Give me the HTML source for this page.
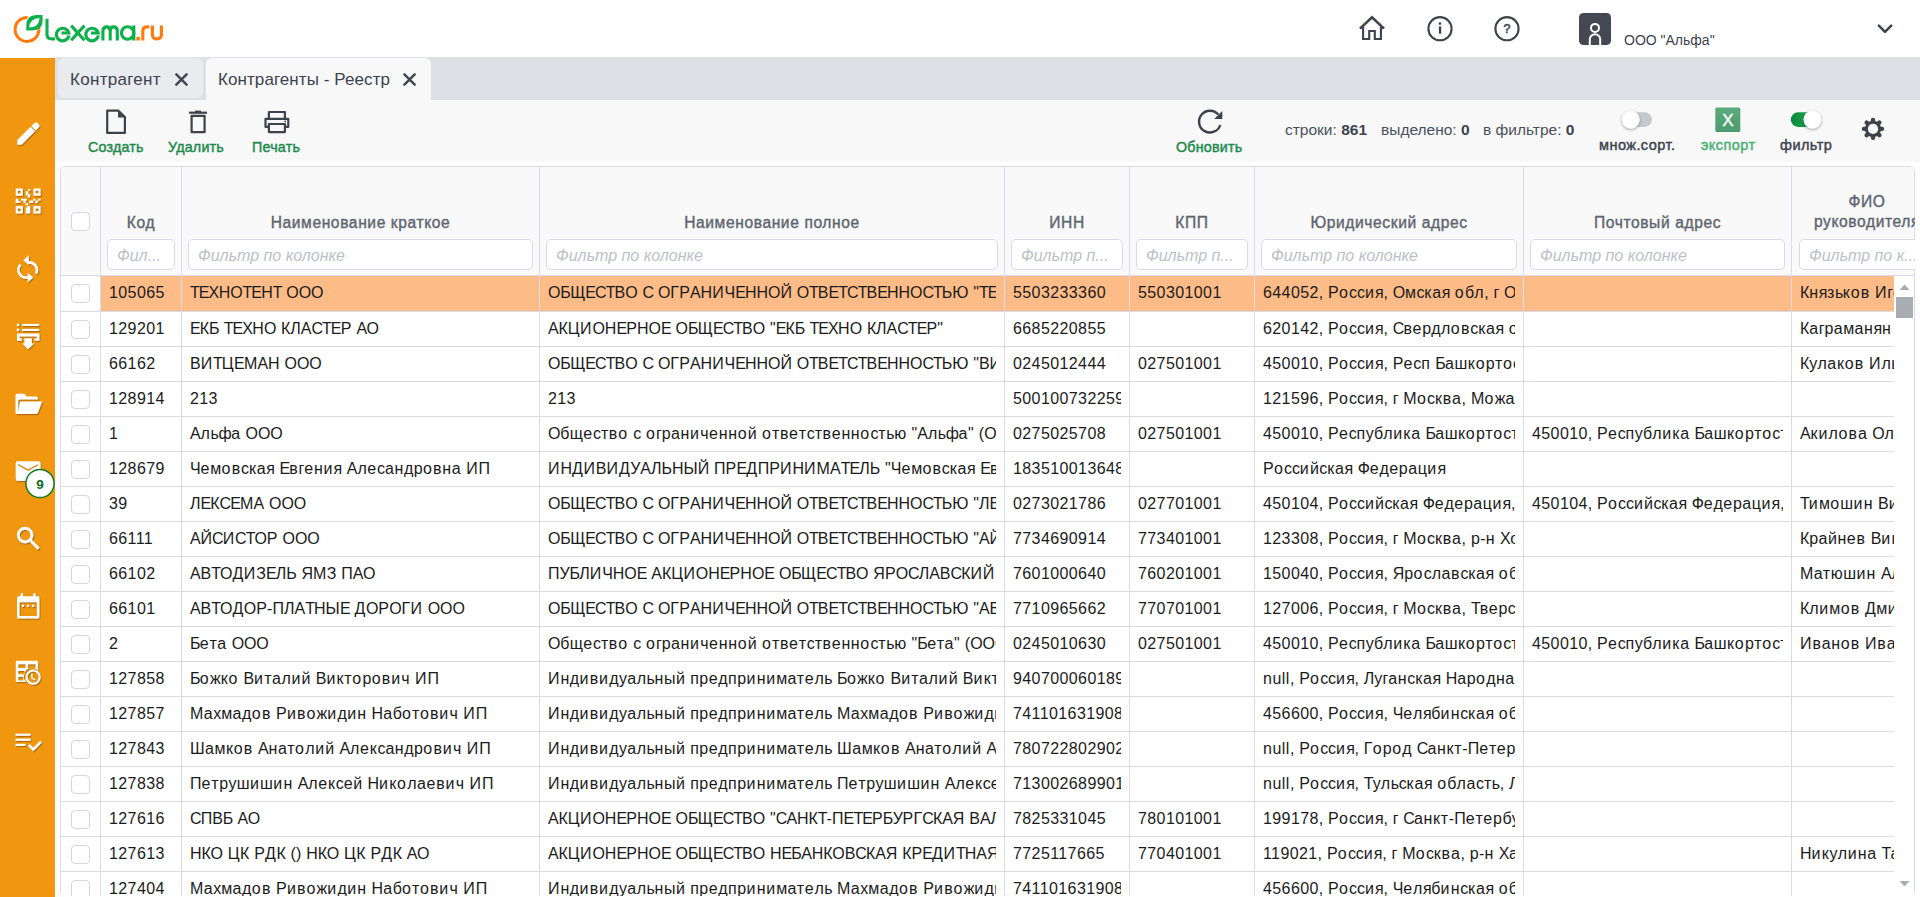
<!DOCTYPE html>
<html><head><meta charset="utf-8"><title>Контрагенты - Реестр</title>
<style>
*{box-sizing:border-box;margin:0;padding:0}
html,body{width:1920px;height:897px;overflow:hidden;background:#fff;font-family:"Liberation Sans",sans-serif;position:relative}
.abs{position:absolute}
#side{position:absolute;left:0;top:58px;width:55px;height:839px;background:#F0960F}
#tabbar{position:absolute;left:55px;top:57px;width:1865px;height:43px;background:#DDE0E5}
.tab{position:absolute;top:58px;height:40px;background:#E9EBEF;border-radius:6px;color:#3d4250;font-size:17px;line-height:42px}
.tab.act{background:#F8F8F9;height:42px;border-radius:6px 6px 0 0}
#toolbar{position:absolute;left:56px;top:100px;width:1864px;height:62px;background:#F8F8F9}
.tbl{position:absolute;top:138px;font-size:14.3px;font-weight:normal;-webkit-text-stroke:.45px currentColor;color:#1E8A4D;letter-spacing:.2px;line-height:18px;white-space:nowrap}
.gridbox{position:absolute;left:60px;top:166px;width:1855px;height:760px;border:1px solid #D9DBE6;border-radius:5px;background:#fff}
.ghead{position:absolute;left:61px;top:167px;width:1853px;height:108px;background:#F9F9FA;border-radius:4px 4px 0 0}
.vl{position:absolute;width:1px;background:#D9DBE6}
.hl{position:absolute;height:1px;background:#D9DBE6}
.cb{position:absolute;width:19px;height:19px;border:1px solid #D3D6DF;border-radius:4px;background:#fff}
.hcell{position:absolute;text-align:center;font-size:15.6px;font-weight:normal;-webkit-text-stroke:.4px #60666F;color:#60666F;letter-spacing:.6px;white-space:nowrap;overflow:hidden}
.flt{position:absolute;height:31px;border:1px solid #D8DBE3;border-radius:5px;background:#fff;overflow:hidden;white-space:nowrap}
.flt span{position:absolute;left:9px;top:1px;line-height:30px;font-size:16px;font-style:italic;color:#BBBFC9}
.selrow{position:absolute;background:#FDBB88}
i{font-style:normal}
.a0{letter-spacing:-1.0px}.a1{letter-spacing:-0.9px}.a2{letter-spacing:-0.8px}.a3{letter-spacing:-0.7px}.a4{letter-spacing:-0.6px}.a5{letter-spacing:-0.5px}.a6{letter-spacing:-0.4px}.a7{letter-spacing:-0.3px}.a8{letter-spacing:-0.2px}.a9{letter-spacing:-0.1px}.a10{letter-spacing:0.0px}.a11{letter-spacing:0.1px}.a12{letter-spacing:0.2px}.a13{letter-spacing:0.3px}.a14{letter-spacing:0.4px}.a15{letter-spacing:0.5px}.a16{letter-spacing:0.6px}.a17{letter-spacing:0.7px}.a18{letter-spacing:0.8px}.a19{letter-spacing:0.9px}.a20{letter-spacing:1.0px}.a21{letter-spacing:1.1px}.a22{letter-spacing:1.2px}
.cell{position:absolute;font-size:16px;color:#1b1b1b;white-space:nowrap;overflow:hidden}
.sbar{position:absolute;left:1894px;top:276px;width:20px;height:621px;background:#fff}
.sthumb{position:absolute;left:1896px;top:297px;width:17px;height:21px;background:#A9ACB3}
.sarr{position:absolute}
#gridclip{position:absolute;left:0;top:0;width:1920px;height:897px;clip-path:inset(166px 5px 1px 60px round 5px)}
#icons{position:absolute;left:0;top:0}
.stat{position:absolute;top:119.5px;font-size:15.5px;color:#4B505B;line-height:20px;white-space:nowrap}
.stat b{color:#3E434D}
</style></head>
<body>
<div id="side"></div>
<div id="tabbar"></div>
<div class="tab" style="left:58px;width:145px"><span class="abs" style="left:12px;top:1px;letter-spacing:.3px">Контрагент</span></div>
<div class="tab act" style="left:206px;width:225px"><span class="abs" style="left:12px;top:1px;letter-spacing:.08px">Контрагенты - Реестр</span></div>
<div id="toolbar"></div>
<div class="tbl" style="left:88px">Создать</div>
<div class="tbl" style="left:168px">Удалить</div>
<div class="tbl" style="left:252px">Печать</div>
<div class="tbl" style="left:1176px">Обновить</div>
<div class="stat" style="left:1285px">строки: <b>861</b></div>
<div class="stat" style="left:1381px">выделено: <b>0</b></div>
<div class="stat" style="left:1483px">в фильтре: <b>0</b></div>
<div class="tbl" style="top:136px;font-size:14.5px;letter-spacing:.45px;left:1599px;color:#3E434D">множ.сорт.</div>
<div class="tbl" style="top:136px;font-size:14.5px;letter-spacing:.45px;left:1701px;color:#4CAF72">экспорт</div>
<div class="tbl" style="top:136px;font-size:14.5px;letter-spacing:.45px;left:1780px;color:#3E434D">фильтр</div>
<div id="gridclip"><div class="gridbox"></div>
<div class="ghead"></div>
<div class="selrow" style="left:101px;top:276px;width:1793px;height:35px"></div>
<div class="vl" style="left:100px;top:167px;height:731px"></div>
<div class="vl" style="left:181px;top:167px;height:731px"></div>
<div class="vl" style="left:539px;top:167px;height:731px"></div>
<div class="vl" style="left:1004px;top:167px;height:731px"></div>
<div class="vl" style="left:1129px;top:167px;height:731px"></div>
<div class="vl" style="left:1254px;top:167px;height:731px"></div>
<div class="vl" style="left:1523px;top:167px;height:731px"></div>
<div class="vl" style="left:1791px;top:167px;height:731px"></div>
<div class="hl" style="left:61px;top:275px;width:1853px"></div>
<div class="cb" style="left:71px;top:212px"></div>
<div class="hcell" style="left:101px;width:80px;top:212.5px;height:20px;line-height:20px">Код</div>
<div class="flt" style="left:107px;top:239px;width:68px"><span>Фил...</span></div>
<div class="hcell" style="left:182px;width:357px;top:212.5px;height:20px;line-height:20px">Наименование краткое</div>
<div class="flt" style="left:188px;top:239px;width:345px"><span>Фильтр по колонке</span></div>
<div class="hcell" style="left:540px;width:464px;top:212.5px;height:20px;line-height:20px">Наименование полное</div>
<div class="flt" style="left:546px;top:239px;width:452px"><span>Фильтр по колонке</span></div>
<div class="hcell" style="left:1005px;width:124px;top:212.5px;height:20px;line-height:20px">ИНН</div>
<div class="flt" style="left:1011px;top:239px;width:112px"><span>Фильтр п...</span></div>
<div class="hcell" style="left:1130px;width:124px;top:212.5px;height:20px;line-height:20px">КПП</div>
<div class="flt" style="left:1136px;top:239px;width:112px"><span>Фильтр п...</span></div>
<div class="hcell" style="left:1255px;width:268px;top:212.5px;height:20px;line-height:20px">Юридический адрес</div>
<div class="flt" style="left:1261px;top:239px;width:256px"><span>Фильтр по колонке</span></div>
<div class="hcell" style="left:1524px;width:267px;top:212.5px;height:20px;line-height:20px">Почтовый адрес</div>
<div class="flt" style="left:1530px;top:239px;width:255px"><span>Фильтр по колонке</span></div>
<div class="hcell" style="left:1792px;width:150px;top:191.5px;height:44px;line-height:20px">ФИО<br>руководителя</div>
<div class="flt" style="left:1799px;top:239px;width:138px"><span>Фильтр по к...</span></div>
<div class="hl" style="left:61px;top:311px;width:1833px"></div>
<div class="cb" style="left:71px;top:284px"></div>
<div class="cell" style="left:109px;top:275px;width:64px;height:35px;line-height:35px"><i class="a14">105065</i></div>
<div class="cell" style="left:190px;top:275px;width:341px;height:35px;line-height:35px"><i class="a0">Т</i><i class="a1">Е</i><i class="a4">Х</i>Н<i class="a9">О</i><i class="a0">Т</i><i class="a1">Е</i>Н<i class="a0">Т</i><i class="a14"> </i><i class="a9">ООО</i></div>
<div class="cell" style="left:548px;top:275px;width:448px;height:35px;line-height:35px"><i class="a9">О</i><i class="a3">Б</i><i class="a11">Щ</i><i class="a1">ЕС</i><i class="a0">Т</i>В<i class="a9">О</i><i class="a14"> </i><i class="a1">С</i><i class="a14"> </i><i class="a9">О</i><i class="a12">ГР</i><i class="a9">А</i>Н<i class="a19">И</i><i class="a9">Ч</i><i class="a1">Е</i>НН<i class="a9">ОЙ</i><i class="a14"> </i><i class="a9">О</i><i class="a0">Т</i>В<i class="a1">Е</i><i class="a0">Т</i><i class="a1">С</i><i class="a0">Т</i>В<i class="a1">Е</i>НН<i class="a9">О</i><i class="a1">С</i><i class="a0">Т</i>Ь<i class="a8">Ю</i><i class="a14"> </i><i class="a11">&quot;</i><i class="a0">Т</i><i class="a1">Е</i><i class="a4">Х</i>Н<i class="a9">О</i><i class="a0">Т</i><i class="a1">Е</i>Н<i class="a0">Т</i><i class="a11">&quot;</i></div>
<div class="cell" style="left:1013px;top:275px;width:108px;height:35px;line-height:35px"><i class="a14">5503233360</i></div>
<div class="cell" style="left:1138px;top:275px;width:108px;height:35px;line-height:35px"><i class="a14">550301001</i></div>
<div class="cell" style="left:1263px;top:275px;width:252px;height:35px;line-height:35px"><i class="a14">644052</i>,<i class="a14"> </i><i class="a12">Р</i><i class="a22">о</i><i class="a9">сс</i><i class="a22">и</i><i class="a7">я</i>,<i class="a14"> </i><i class="a9">О</i><i class="a13">м</i><i class="a9">с</i><i class="a18">к</i><i class="a16">а</i><i class="a7">я</i><i class="a14"> </i><i class="a22">о</i><i class="a11">б</i><i class="a16">л</i>,<i class="a14"> </i><i class="a9">г</i><i class="a14"> </i><i class="a9">О</i><i class="a13">м</i><i class="a9">с</i><i class="a18">к</i></div>
<div class="cell" style="left:1800px;top:275px;width:94px;height:35px;line-height:35px"><i class="a9">К</i><i class="a16">н</i><i class="a7">я</i><i class="a15">з</i><i class="a6">ь</i><i class="a18">к</i><i class="a22">о</i><i class="a18">в</i><i class="a14"> </i><i class="a19">И</i><i class="a9">г</i><i class="a22">о</i><i class="a14">р</i><i class="a6">ь</i><i class="a14"> </i>Н<i class="a22">и</i><i class="a18">к</i><i class="a22">о</i><i class="a16">ла</i><i class="a18">ев</i><i class="a22">и</i><i class="a16">ч</i></div>
<div class="hl" style="left:61px;top:346px;width:1833px"></div>
<div class="cb" style="left:71px;top:320px"></div>
<div class="cell" style="left:109px;top:311px;width:64px;height:35px;line-height:35px"><i class="a14">129201</i></div>
<div class="cell" style="left:190px;top:311px;width:341px;height:35px;line-height:35px"><i class="a1">Е</i><i class="a9">К</i><i class="a3">Б</i><i class="a14"> </i><i class="a0">Т</i><i class="a1">Е</i><i class="a4">Х</i>Н<i class="a9">О</i><i class="a14"> </i><i class="a9">К</i>Л<i class="a9">А</i><i class="a1">С</i><i class="a0">Т</i><i class="a1">Е</i><i class="a12">Р</i><i class="a14"> </i><i class="a9">АО</i></div>
<div class="cell" style="left:548px;top:311px;width:448px;height:35px;line-height:35px"><i class="a9">АК</i><i class="a14">Ц</i><i class="a19">И</i><i class="a9">О</i>Н<i class="a1">Е</i><i class="a12">Р</i>Н<i class="a9">О</i><i class="a1">Е</i><i class="a14"> </i><i class="a9">О</i><i class="a3">Б</i><i class="a11">Щ</i><i class="a1">ЕС</i><i class="a0">Т</i>В<i class="a9">О</i><i class="a14"> </i><i class="a11">&quot;</i><i class="a1">Е</i><i class="a9">К</i><i class="a3">Б</i><i class="a14"> </i><i class="a0">Т</i><i class="a1">Е</i><i class="a4">Х</i>Н<i class="a9">О</i><i class="a14"> </i><i class="a9">К</i>Л<i class="a9">А</i><i class="a1">С</i><i class="a0">Т</i><i class="a1">Е</i><i class="a12">Р</i><i class="a11">&quot;</i></div>
<div class="cell" style="left:1013px;top:311px;width:108px;height:35px;line-height:35px"><i class="a14">6685220855</i></div>
<div class="cell" style="left:1263px;top:311px;width:252px;height:35px;line-height:35px"><i class="a14">620142</i>,<i class="a14"> </i><i class="a12">Р</i><i class="a22">о</i><i class="a9">сс</i><i class="a22">и</i><i class="a7">я</i>,<i class="a14"> </i><i class="a1">С</i><i class="a18">ве</i><i class="a14">рд</i><i class="a16">л</i><i class="a22">о</i><i class="a18">в</i><i class="a9">с</i><i class="a18">к</i><i class="a16">а</i><i class="a7">я</i><i class="a14"> </i><i class="a22">о</i><i class="a11">б</i><i class="a16">л</i></div>
<div class="cell" style="left:1800px;top:311px;width:94px;height:35px;line-height:35px"><i class="a9">К</i><i class="a16">а</i><i class="a9">г</i><i class="a14">р</i><i class="a16">а</i><i class="a13">м</i><i class="a16">ан</i><i class="a7">я</i><i class="a16">н</i><i class="a14"> </i><i class="a9">А</i><i class="a14">р</i><i class="a16">т</i><i class="a12">у</i><i class="a14">р</i></div>
<div class="hl" style="left:61px;top:381px;width:1833px"></div>
<div class="cb" style="left:71px;top:355px"></div>
<div class="cell" style="left:109px;top:346px;width:64px;height:35px;line-height:35px"><i class="a14">66162</i></div>
<div class="cell" style="left:190px;top:346px;width:341px;height:35px;line-height:35px">В<i class="a19">И</i><i class="a0">Т</i><i class="a14">Ц</i><i class="a1">Е</i><i class="a13">М</i><i class="a9">А</i>Н<i class="a14"> </i><i class="a9">ООО</i></div>
<div class="cell" style="left:548px;top:346px;width:448px;height:35px;line-height:35px"><i class="a9">О</i><i class="a3">Б</i><i class="a11">Щ</i><i class="a1">ЕС</i><i class="a0">Т</i>В<i class="a9">О</i><i class="a14"> </i><i class="a1">С</i><i class="a14"> </i><i class="a9">О</i><i class="a12">ГР</i><i class="a9">А</i>Н<i class="a19">И</i><i class="a9">Ч</i><i class="a1">Е</i>НН<i class="a9">ОЙ</i><i class="a14"> </i><i class="a9">О</i><i class="a0">Т</i>В<i class="a1">Е</i><i class="a0">Т</i><i class="a1">С</i><i class="a0">Т</i>В<i class="a1">Е</i>НН<i class="a9">О</i><i class="a1">С</i><i class="a0">Т</i>Ь<i class="a8">Ю</i><i class="a14"> </i><i class="a11">&quot;</i>В<i class="a19">И</i><i class="a0">Т</i><i class="a14">Ц</i><i class="a1">Е</i><i class="a13">М</i><i class="a9">А</i>Н<i class="a11">&quot;</i></div>
<div class="cell" style="left:1013px;top:346px;width:108px;height:35px;line-height:35px"><i class="a14">0245012444</i></div>
<div class="cell" style="left:1138px;top:346px;width:108px;height:35px;line-height:35px"><i class="a14">027501001</i></div>
<div class="cell" style="left:1263px;top:346px;width:252px;height:35px;line-height:35px"><i class="a14">450010</i>,<i class="a14"> </i><i class="a12">Р</i><i class="a22">о</i><i class="a9">сс</i><i class="a22">и</i><i class="a7">я</i>,<i class="a14"> </i><i class="a12">Р</i><i class="a18">е</i><i class="a9">с</i><i class="a15">п</i><i class="a14"> </i><i class="a3">Б</i><i class="a16">а</i><i class="a14">ш</i><i class="a18">к</i><i class="a22">о</i><i class="a14">р</i><i class="a16">т</i><i class="a22">о</i><i class="a9">с</i><i class="a16">тан</i></div>
<div class="cell" style="left:1800px;top:346px;width:94px;height:35px;line-height:35px"><i class="a9">К</i><i class="a12">у</i><i class="a16">ла</i><i class="a18">к</i><i class="a22">о</i><i class="a18">в</i><i class="a14"> </i><i class="a19">И</i><i class="a16">л</i><i class="a6">ь</i><i class="a7">я</i></div>
<div class="hl" style="left:61px;top:416px;width:1833px"></div>
<div class="cb" style="left:71px;top:390px"></div>
<div class="cell" style="left:109px;top:381px;width:64px;height:35px;line-height:35px"><i class="a14">128914</i></div>
<div class="cell" style="left:190px;top:381px;width:341px;height:35px;line-height:35px"><i class="a14">213</i></div>
<div class="cell" style="left:548px;top:381px;width:448px;height:35px;line-height:35px"><i class="a14">213</i></div>
<div class="cell" style="left:1013px;top:381px;width:108px;height:35px;line-height:35px"><i class="a14">500100732259</i></div>
<div class="cell" style="left:1263px;top:381px;width:252px;height:35px;line-height:35px"><i class="a14">121596</i>,<i class="a14"> </i><i class="a12">Р</i><i class="a22">о</i><i class="a9">сс</i><i class="a22">и</i><i class="a7">я</i>,<i class="a14"> </i><i class="a9">г</i><i class="a14"> </i><i class="a13">М</i><i class="a22">о</i><i class="a9">с</i><i class="a18">кв</i><i class="a16">а</i>,<i class="a14"> </i><i class="a13">М</i><i class="a22">о</i>ж<i class="a16">а</i><i class="a14">й</i><i class="a9">с</i><i class="a18">к</i><i class="a22">о</i><i class="a18">е</i><i class="a14"> ш</i></div>
<div class="hl" style="left:61px;top:451px;width:1833px"></div>
<div class="cb" style="left:71px;top:425px"></div>
<div class="cell" style="left:109px;top:416px;width:64px;height:35px;line-height:35px"><i class="a14">1</i></div>
<div class="cell" style="left:190px;top:416px;width:341px;height:35px;line-height:35px"><i class="a9">А</i><i class="a16">л</i><i class="a6">ьф</i><i class="a16">а</i><i class="a14"> </i><i class="a9">ООО</i></div>
<div class="cell" style="left:548px;top:416px;width:448px;height:35px;line-height:35px"><i class="a9">О</i><i class="a11">б</i><i class="a15">щ</i><i class="a18">е</i><i class="a9">с</i><i class="a16">т</i><i class="a18">в</i><i class="a22">о</i><i class="a14"> </i><i class="a9">с</i><i class="a14"> </i><i class="a22">о</i><i class="a9">г</i><i class="a14">р</i><i class="a16">ан</i><i class="a22">и</i><i class="a16">ч</i><i class="a18">е</i><i class="a16">нн</i><i class="a22">о</i><i class="a14">й </i><i class="a22">о</i><i class="a16">т</i><i class="a18">ве</i><i class="a16">т</i><i class="a9">с</i><i class="a16">т</i><i class="a18">ве</i><i class="a16">нн</i><i class="a22">о</i><i class="a9">с</i><i class="a16">т</i><i class="a6">ь</i><i class="a15">ю</i><i class="a14"> </i><i class="a11">&quot;</i><i class="a9">А</i><i class="a16">л</i><i class="a6">ьф</i><i class="a16">а</i><i class="a11">&quot;</i><i class="a14"> </i><i class="a11">(</i><i class="a9">ООО</i><i class="a14"> </i><i class="a11">&quot;</i><i class="a9">А</i><i class="a16">л</i><i class="a6">ьф</i><i class="a16">а</i><i class="a11">&quot;)</i></div>
<div class="cell" style="left:1013px;top:416px;width:108px;height:35px;line-height:35px"><i class="a14">0275025708</i></div>
<div class="cell" style="left:1138px;top:416px;width:108px;height:35px;line-height:35px"><i class="a14">027501001</i></div>
<div class="cell" style="left:1263px;top:416px;width:252px;height:35px;line-height:35px"><i class="a14">450010</i>,<i class="a14"> </i><i class="a12">Р</i><i class="a18">е</i><i class="a9">с</i><i class="a15">п</i><i class="a12">у</i><i class="a11">б</i><i class="a16">л</i><i class="a22">и</i><i class="a18">к</i><i class="a16">а</i><i class="a14"> </i><i class="a3">Б</i><i class="a16">а</i><i class="a14">ш</i><i class="a18">к</i><i class="a22">о</i><i class="a14">р</i><i class="a16">т</i><i class="a22">о</i><i class="a9">с</i><i class="a16">тан</i></div>
<div class="cell" style="left:1532px;top:416px;width:251px;height:35px;line-height:35px"><i class="a14">450010</i>,<i class="a14"> </i><i class="a12">Р</i><i class="a18">е</i><i class="a9">с</i><i class="a15">п</i><i class="a12">у</i><i class="a11">б</i><i class="a16">л</i><i class="a22">и</i><i class="a18">к</i><i class="a16">а</i><i class="a14"> </i><i class="a3">Б</i><i class="a16">а</i><i class="a14">ш</i><i class="a18">к</i><i class="a22">о</i><i class="a14">р</i><i class="a16">т</i><i class="a22">о</i><i class="a9">с</i><i class="a16">тан</i></div>
<div class="cell" style="left:1800px;top:416px;width:94px;height:35px;line-height:35px"><i class="a9">А</i><i class="a18">к</i><i class="a22">и</i><i class="a16">л</i><i class="a22">о</i><i class="a18">в</i><i class="a16">а</i><i class="a14"> </i><i class="a9">О</i><i class="a16">л</i><i class="a6">ь</i><i class="a9">г</i><i class="a16">а</i></div>
<div class="hl" style="left:61px;top:486px;width:1833px"></div>
<div class="cb" style="left:71px;top:460px"></div>
<div class="cell" style="left:109px;top:451px;width:64px;height:35px;line-height:35px"><i class="a14">128679</i></div>
<div class="cell" style="left:190px;top:451px;width:341px;height:35px;line-height:35px"><i class="a9">Ч</i><i class="a18">е</i><i class="a13">м</i><i class="a22">о</i><i class="a18">в</i><i class="a9">с</i><i class="a18">к</i><i class="a16">а</i><i class="a7">я</i><i class="a14"> </i><i class="a1">Е</i><i class="a18">в</i><i class="a9">г</i><i class="a18">е</i><i class="a16">н</i><i class="a22">и</i><i class="a7">я</i><i class="a14"> </i><i class="a9">А</i><i class="a16">л</i><i class="a18">е</i><i class="a9">с</i><i class="a16">ан</i><i class="a14">др</i><i class="a22">о</i><i class="a18">в</i><i class="a16">на</i><i class="a14"> </i><i class="a19">И</i>П</div>
<div class="cell" style="left:548px;top:451px;width:448px;height:35px;line-height:35px"><i class="a19">И</i>Н<i class="a16">Д</i><i class="a19">И</i>В<i class="a19">И</i><i class="a16">Д</i><i class="a8">У</i><i class="a9">А</i>ЛЬН<i class="a12">Ы</i><i class="a9">Й</i><i class="a14"> </i>П<i class="a12">Р</i><i class="a1">Е</i><i class="a16">Д</i>П<i class="a12">Р</i><i class="a19">И</i>Н<i class="a19">И</i><i class="a13">М</i><i class="a9">А</i><i class="a0">Т</i><i class="a1">Е</i>ЛЬ<i class="a14"> </i><i class="a11">&quot;</i><i class="a9">Ч</i><i class="a18">е</i><i class="a13">м</i><i class="a22">о</i><i class="a18">в</i><i class="a9">с</i><i class="a18">к</i><i class="a16">а</i><i class="a7">я</i><i class="a14"> </i><i class="a1">Е</i><i class="a18">в</i><i class="a9">г</i><i class="a18">е</i><i class="a16">н</i><i class="a22">и</i><i class="a7">я</i><i class="a11">&quot;</i></div>
<div class="cell" style="left:1013px;top:451px;width:108px;height:35px;line-height:35px"><i class="a14">183510013648</i></div>
<div class="cell" style="left:1263px;top:451px;width:252px;height:35px;line-height:35px"><i class="a12">Р</i><i class="a22">о</i><i class="a9">сс</i><i class="a22">и</i><i class="a14">й</i><i class="a9">с</i><i class="a18">к</i><i class="a16">а</i><i class="a7">я</i><i class="a14"> </i><i class="a8">Ф</i><i class="a18">е</i><i class="a14">д</i><i class="a18">е</i><i class="a14">р</i><i class="a16">а</i><i class="a15">ц</i><i class="a22">и</i><i class="a7">я</i></div>
<div class="hl" style="left:61px;top:521px;width:1833px"></div>
<div class="cb" style="left:71px;top:495px"></div>
<div class="cell" style="left:109px;top:486px;width:64px;height:35px;line-height:35px"><i class="a14">39</i></div>
<div class="cell" style="left:190px;top:486px;width:341px;height:35px;line-height:35px">Л<i class="a1">Е</i><i class="a9">К</i><i class="a1">СЕ</i><i class="a13">М</i><i class="a9">А</i><i class="a14"> </i><i class="a9">ООО</i></div>
<div class="cell" style="left:548px;top:486px;width:448px;height:35px;line-height:35px"><i class="a9">О</i><i class="a3">Б</i><i class="a11">Щ</i><i class="a1">ЕС</i><i class="a0">Т</i>В<i class="a9">О</i><i class="a14"> </i><i class="a1">С</i><i class="a14"> </i><i class="a9">О</i><i class="a12">ГР</i><i class="a9">А</i>Н<i class="a19">И</i><i class="a9">Ч</i><i class="a1">Е</i>НН<i class="a9">ОЙ</i><i class="a14"> </i><i class="a9">О</i><i class="a0">Т</i>В<i class="a1">Е</i><i class="a0">Т</i><i class="a1">С</i><i class="a0">Т</i>В<i class="a1">Е</i>НН<i class="a9">О</i><i class="a1">С</i><i class="a0">Т</i>Ь<i class="a8">Ю</i><i class="a14"> </i><i class="a11">&quot;</i>Л<i class="a1">Е</i><i class="a9">К</i><i class="a1">СЕ</i><i class="a13">М</i><i class="a9">А</i><i class="a11">&quot;</i></div>
<div class="cell" style="left:1013px;top:486px;width:108px;height:35px;line-height:35px"><i class="a14">0273021786</i></div>
<div class="cell" style="left:1138px;top:486px;width:108px;height:35px;line-height:35px"><i class="a14">027701001</i></div>
<div class="cell" style="left:1263px;top:486px;width:252px;height:35px;line-height:35px"><i class="a14">450104</i>,<i class="a14"> </i><i class="a12">Р</i><i class="a22">о</i><i class="a9">сс</i><i class="a22">и</i><i class="a14">й</i><i class="a9">с</i><i class="a18">к</i><i class="a16">а</i><i class="a7">я</i><i class="a14"> </i><i class="a8">Ф</i><i class="a18">е</i><i class="a14">д</i><i class="a18">е</i><i class="a14">р</i><i class="a16">а</i><i class="a15">ц</i><i class="a22">и</i><i class="a7">я</i>,<i class="a14"> </i><i class="a9">г</i></div>
<div class="cell" style="left:1532px;top:486px;width:251px;height:35px;line-height:35px"><i class="a14">450104</i>,<i class="a14"> </i><i class="a12">Р</i><i class="a22">о</i><i class="a9">сс</i><i class="a22">и</i><i class="a14">й</i><i class="a9">с</i><i class="a18">к</i><i class="a16">а</i><i class="a7">я</i><i class="a14"> </i><i class="a8">Ф</i><i class="a18">е</i><i class="a14">д</i><i class="a18">е</i><i class="a14">р</i><i class="a16">а</i><i class="a15">ц</i><i class="a22">и</i><i class="a7">я</i>,<i class="a14"> </i><i class="a9">г</i></div>
<div class="cell" style="left:1800px;top:486px;width:94px;height:35px;line-height:35px"><i class="a0">Т</i><i class="a22">и</i><i class="a13">м</i><i class="a22">о</i><i class="a14">ш</i><i class="a22">и</i><i class="a16">н</i><i class="a14"> </i>В<i class="a22">и</i><i class="a18">к</i><i class="a16">т</i><i class="a22">о</i><i class="a14">р</i></div>
<div class="hl" style="left:61px;top:556px;width:1833px"></div>
<div class="cb" style="left:71px;top:530px"></div>
<div class="cell" style="left:109px;top:521px;width:64px;height:35px;line-height:35px"><i class="a14">66111</i></div>
<div class="cell" style="left:190px;top:521px;width:341px;height:35px;line-height:35px"><i class="a9">АЙ</i><i class="a1">С</i><i class="a19">И</i><i class="a1">С</i><i class="a0">Т</i><i class="a9">О</i><i class="a12">Р</i><i class="a14"> </i><i class="a9">ООО</i></div>
<div class="cell" style="left:548px;top:521px;width:448px;height:35px;line-height:35px"><i class="a9">О</i><i class="a3">Б</i><i class="a11">Щ</i><i class="a1">ЕС</i><i class="a0">Т</i>В<i class="a9">О</i><i class="a14"> </i><i class="a1">С</i><i class="a14"> </i><i class="a9">О</i><i class="a12">ГР</i><i class="a9">А</i>Н<i class="a19">И</i><i class="a9">Ч</i><i class="a1">Е</i>НН<i class="a9">ОЙ</i><i class="a14"> </i><i class="a9">О</i><i class="a0">Т</i>В<i class="a1">Е</i><i class="a0">Т</i><i class="a1">С</i><i class="a0">Т</i>В<i class="a1">Е</i>НН<i class="a9">О</i><i class="a1">С</i><i class="a0">Т</i>Ь<i class="a8">Ю</i><i class="a14"> </i><i class="a11">&quot;</i><i class="a9">АЙ</i><i class="a1">С</i><i class="a19">И</i><i class="a1">С</i><i class="a0">Т</i><i class="a9">О</i><i class="a12">Р</i><i class="a11">&quot;</i></div>
<div class="cell" style="left:1013px;top:521px;width:108px;height:35px;line-height:35px"><i class="a14">7734690914</i></div>
<div class="cell" style="left:1138px;top:521px;width:108px;height:35px;line-height:35px"><i class="a14">773401001</i></div>
<div class="cell" style="left:1263px;top:521px;width:252px;height:35px;line-height:35px"><i class="a14">123308</i>,<i class="a14"> </i><i class="a12">Р</i><i class="a22">о</i><i class="a9">сс</i><i class="a22">и</i><i class="a7">я</i>,<i class="a14"> </i><i class="a9">г</i><i class="a14"> </i><i class="a13">М</i><i class="a22">о</i><i class="a9">с</i><i class="a18">кв</i><i class="a16">а</i>,<i class="a14"> р</i><i class="a12">-</i><i class="a16">н</i><i class="a14"> </i><i class="a4">Х</i><i class="a22">о</i><i class="a14">р</i><i class="a22">о</i><i class="a14">ш</i><i class="a18">ев</i><i class="a22">о</i></div>
<div class="cell" style="left:1800px;top:521px;width:94px;height:35px;line-height:35px"><i class="a9">К</i><i class="a14">р</i><i class="a16">а</i><i class="a14">й</i><i class="a16">н</i><i class="a18">ев</i><i class="a14"> </i>В<i class="a22">и</i><i class="a18">к</i><i class="a16">т</i><i class="a22">о</i><i class="a14">р</i></div>
<div class="hl" style="left:61px;top:591px;width:1833px"></div>
<div class="cb" style="left:71px;top:565px"></div>
<div class="cell" style="left:109px;top:556px;width:64px;height:35px;line-height:35px"><i class="a14">66102</i></div>
<div class="cell" style="left:190px;top:556px;width:341px;height:35px;line-height:35px"><i class="a9">А</i>В<i class="a0">Т</i><i class="a9">О</i><i class="a16">Д</i><i class="a19">И</i>З<i class="a1">Е</i>ЛЬ<i class="a14"> </i>Я<i class="a13">М</i>З<i class="a14"> </i>П<i class="a9">АО</i></div>
<div class="cell" style="left:548px;top:556px;width:448px;height:35px;line-height:35px">П<i class="a8">У</i><i class="a3">Б</i>Л<i class="a19">И</i><i class="a9">Ч</i>Н<i class="a9">О</i><i class="a1">Е</i><i class="a14"> </i><i class="a9">АК</i><i class="a14">Ц</i><i class="a19">И</i><i class="a9">О</i>Н<i class="a1">Е</i><i class="a12">Р</i>Н<i class="a9">О</i><i class="a1">Е</i><i class="a14"> </i><i class="a9">О</i><i class="a3">Б</i><i class="a11">Щ</i><i class="a1">ЕС</i><i class="a0">Т</i>В<i class="a9">О</i><i class="a14"> </i>Я<i class="a12">Р</i><i class="a9">О</i><i class="a1">С</i>Л<i class="a9">А</i>В<i class="a1">С</i><i class="a9">К</i><i class="a19">И</i><i class="a9">Й</i><i class="a14"> </i><i class="a13">М</i><i class="a9">О</i><i class="a0">Т</i><i class="a9">О</i><i class="a12">Р</i>Н<i class="a12">Ы</i><i class="a9">Й</i></div>
<div class="cell" style="left:1013px;top:556px;width:108px;height:35px;line-height:35px"><i class="a14">7601000640</i></div>
<div class="cell" style="left:1138px;top:556px;width:108px;height:35px;line-height:35px"><i class="a14">760201001</i></div>
<div class="cell" style="left:1263px;top:556px;width:252px;height:35px;line-height:35px"><i class="a14">150040</i>,<i class="a14"> </i><i class="a12">Р</i><i class="a22">о</i><i class="a9">сс</i><i class="a22">и</i><i class="a7">я</i>,<i class="a14"> </i>Я<i class="a14">р</i><i class="a22">о</i><i class="a9">с</i><i class="a16">ла</i><i class="a18">в</i><i class="a9">с</i><i class="a18">к</i><i class="a16">а</i><i class="a7">я</i><i class="a14"> </i><i class="a22">о</i><i class="a11">б</i><i class="a16">л</i></div>
<div class="cell" style="left:1800px;top:556px;width:94px;height:35px;line-height:35px"><i class="a13">М</i><i class="a16">ат</i><i class="a15">ю</i><i class="a14">ш</i><i class="a22">и</i><i class="a16">н</i><i class="a14"> </i><i class="a9">А</i><i class="a16">л</i><i class="a18">ек</i><i class="a9">с</i><i class="a18">е</i><i class="a14">й</i></div>
<div class="hl" style="left:61px;top:626px;width:1833px"></div>
<div class="cb" style="left:71px;top:600px"></div>
<div class="cell" style="left:109px;top:591px;width:64px;height:35px;line-height:35px"><i class="a14">66101</i></div>
<div class="cell" style="left:190px;top:591px;width:341px;height:35px;line-height:35px"><i class="a9">А</i>В<i class="a0">Т</i><i class="a9">О</i><i class="a16">Д</i><i class="a9">О</i><i class="a12">Р-</i>ПЛ<i class="a9">А</i><i class="a0">Т</i>Н<i class="a12">Ы</i><i class="a1">Е</i><i class="a14"> </i><i class="a16">Д</i><i class="a9">О</i><i class="a12">Р</i><i class="a9">О</i><i class="a12">Г</i><i class="a19">И</i><i class="a14"> </i><i class="a9">ООО</i></div>
<div class="cell" style="left:548px;top:591px;width:448px;height:35px;line-height:35px"><i class="a9">О</i><i class="a3">Б</i><i class="a11">Щ</i><i class="a1">ЕС</i><i class="a0">Т</i>В<i class="a9">О</i><i class="a14"> </i><i class="a1">С</i><i class="a14"> </i><i class="a9">О</i><i class="a12">ГР</i><i class="a9">А</i>Н<i class="a19">И</i><i class="a9">Ч</i><i class="a1">Е</i>НН<i class="a9">ОЙ</i><i class="a14"> </i><i class="a9">О</i><i class="a0">Т</i>В<i class="a1">Е</i><i class="a0">Т</i><i class="a1">С</i><i class="a0">Т</i>В<i class="a1">Е</i>НН<i class="a9">О</i><i class="a1">С</i><i class="a0">Т</i>Ь<i class="a8">Ю</i><i class="a14"> </i><i class="a11">&quot;</i><i class="a9">А</i>В<i class="a0">Т</i><i class="a9">О</i><i class="a16">Д</i><i class="a9">О</i><i class="a12">Р</i><i class="a11">&quot;</i></div>
<div class="cell" style="left:1013px;top:591px;width:108px;height:35px;line-height:35px"><i class="a14">7710965662</i></div>
<div class="cell" style="left:1138px;top:591px;width:108px;height:35px;line-height:35px"><i class="a14">770701001</i></div>
<div class="cell" style="left:1263px;top:591px;width:252px;height:35px;line-height:35px"><i class="a14">127006</i>,<i class="a14"> </i><i class="a12">Р</i><i class="a22">о</i><i class="a9">сс</i><i class="a22">и</i><i class="a7">я</i>,<i class="a14"> </i><i class="a9">г</i><i class="a14"> </i><i class="a13">М</i><i class="a22">о</i><i class="a9">с</i><i class="a18">кв</i><i class="a16">а</i>,<i class="a14"> </i><i class="a0">Т</i><i class="a18">ве</i><i class="a14">р</i><i class="a9">с</i><i class="a18">к</i><i class="a16">а</i><i class="a7">я</i></div>
<div class="cell" style="left:1800px;top:591px;width:94px;height:35px;line-height:35px"><i class="a9">К</i><i class="a16">л</i><i class="a22">и</i><i class="a13">м</i><i class="a22">о</i><i class="a18">в</i><i class="a14"> </i><i class="a16">Д</i><i class="a13">м</i><i class="a22">и</i><i class="a16">т</i><i class="a14">р</i><i class="a22">и</i><i class="a14">й</i></div>
<div class="hl" style="left:61px;top:661px;width:1833px"></div>
<div class="cb" style="left:71px;top:635px"></div>
<div class="cell" style="left:109px;top:626px;width:64px;height:35px;line-height:35px"><i class="a14">2</i></div>
<div class="cell" style="left:190px;top:626px;width:341px;height:35px;line-height:35px"><i class="a3">Б</i><i class="a18">е</i><i class="a16">та</i><i class="a14"> </i><i class="a9">ООО</i></div>
<div class="cell" style="left:548px;top:626px;width:448px;height:35px;line-height:35px"><i class="a9">О</i><i class="a11">б</i><i class="a15">щ</i><i class="a18">е</i><i class="a9">с</i><i class="a16">т</i><i class="a18">в</i><i class="a22">о</i><i class="a14"> </i><i class="a9">с</i><i class="a14"> </i><i class="a22">о</i><i class="a9">г</i><i class="a14">р</i><i class="a16">ан</i><i class="a22">и</i><i class="a16">ч</i><i class="a18">е</i><i class="a16">нн</i><i class="a22">о</i><i class="a14">й </i><i class="a22">о</i><i class="a16">т</i><i class="a18">ве</i><i class="a16">т</i><i class="a9">с</i><i class="a16">т</i><i class="a18">ве</i><i class="a16">нн</i><i class="a22">о</i><i class="a9">с</i><i class="a16">т</i><i class="a6">ь</i><i class="a15">ю</i><i class="a14"> </i><i class="a11">&quot;</i><i class="a3">Б</i><i class="a18">е</i><i class="a16">та</i><i class="a11">&quot;</i><i class="a14"> </i><i class="a11">(</i><i class="a9">ООО</i><i class="a14"> </i><i class="a11">&quot;</i><i class="a3">Б</i><i class="a18">е</i><i class="a16">та</i><i class="a11">&quot;)</i></div>
<div class="cell" style="left:1013px;top:626px;width:108px;height:35px;line-height:35px"><i class="a14">0245010630</i></div>
<div class="cell" style="left:1138px;top:626px;width:108px;height:35px;line-height:35px"><i class="a14">027501001</i></div>
<div class="cell" style="left:1263px;top:626px;width:252px;height:35px;line-height:35px"><i class="a14">450010</i>,<i class="a14"> </i><i class="a12">Р</i><i class="a18">е</i><i class="a9">с</i><i class="a15">п</i><i class="a12">у</i><i class="a11">б</i><i class="a16">л</i><i class="a22">и</i><i class="a18">к</i><i class="a16">а</i><i class="a14"> </i><i class="a3">Б</i><i class="a16">а</i><i class="a14">ш</i><i class="a18">к</i><i class="a22">о</i><i class="a14">р</i><i class="a16">т</i><i class="a22">о</i><i class="a9">с</i><i class="a16">тан</i></div>
<div class="cell" style="left:1532px;top:626px;width:251px;height:35px;line-height:35px"><i class="a14">450010</i>,<i class="a14"> </i><i class="a12">Р</i><i class="a18">е</i><i class="a9">с</i><i class="a15">п</i><i class="a12">у</i><i class="a11">б</i><i class="a16">л</i><i class="a22">и</i><i class="a18">к</i><i class="a16">а</i><i class="a14"> </i><i class="a3">Б</i><i class="a16">а</i><i class="a14">ш</i><i class="a18">к</i><i class="a22">о</i><i class="a14">р</i><i class="a16">т</i><i class="a22">о</i><i class="a9">с</i><i class="a16">тан</i></div>
<div class="cell" style="left:1800px;top:626px;width:94px;height:35px;line-height:35px"><i class="a19">И</i><i class="a18">в</i><i class="a16">ан</i><i class="a22">о</i><i class="a18">в</i><i class="a14"> </i><i class="a19">И</i><i class="a18">в</i><i class="a16">ан</i></div>
<div class="hl" style="left:61px;top:696px;width:1833px"></div>
<div class="cb" style="left:71px;top:670px"></div>
<div class="cell" style="left:109px;top:661px;width:64px;height:35px;line-height:35px"><i class="a14">127858</i></div>
<div class="cell" style="left:190px;top:661px;width:341px;height:35px;line-height:35px"><i class="a3">Б</i><i class="a22">о</i>ж<i class="a18">к</i><i class="a22">о</i><i class="a14"> </i>В<i class="a22">и</i><i class="a16">тал</i><i class="a22">и</i><i class="a14">й </i>В<i class="a22">и</i><i class="a18">к</i><i class="a16">т</i><i class="a22">о</i><i class="a14">р</i><i class="a22">о</i><i class="a18">в</i><i class="a22">и</i><i class="a16">ч</i><i class="a14"> </i><i class="a19">И</i>П</div>
<div class="cell" style="left:548px;top:661px;width:448px;height:35px;line-height:35px"><i class="a19">И</i><i class="a16">н</i><i class="a14">д</i><i class="a22">и</i><i class="a18">в</i><i class="a22">и</i><i class="a14">д</i><i class="a12">у</i><i class="a16">ал</i><i class="a6">ь</i><i class="a16">н</i><i class="a15">ы</i><i class="a14">й </i><i class="a15">п</i><i class="a14">р</i><i class="a18">е</i><i class="a14">д</i><i class="a15">п</i><i class="a14">р</i><i class="a22">и</i><i class="a16">н</i><i class="a22">и</i><i class="a13">м</i><i class="a16">ат</i><i class="a18">е</i><i class="a16">л</i><i class="a6">ь</i><i class="a14"> </i><i class="a3">Б</i><i class="a22">о</i>ж<i class="a18">к</i><i class="a22">о</i><i class="a14"> </i>В<i class="a22">и</i><i class="a16">тал</i><i class="a22">и</i><i class="a14">й </i>В<i class="a22">и</i><i class="a18">к</i><i class="a16">т</i><i class="a22">о</i><i class="a14">р</i><i class="a22">о</i><i class="a18">в</i><i class="a22">и</i><i class="a16">ч</i></div>
<div class="cell" style="left:1013px;top:661px;width:108px;height:35px;line-height:35px"><i class="a14">940700060189</i></div>
<div class="cell" style="left:1263px;top:661px;width:252px;height:35px;line-height:35px"><i class="a15">null</i>,<i class="a14"> </i><i class="a12">Р</i><i class="a22">о</i><i class="a9">сс</i><i class="a22">и</i><i class="a7">я</i>,<i class="a14"> </i>Л<i class="a12">у</i><i class="a9">г</i><i class="a16">ан</i><i class="a9">с</i><i class="a18">к</i><i class="a16">а</i><i class="a7">я</i><i class="a14"> </i>Н<i class="a16">а</i><i class="a14">р</i><i class="a22">о</i><i class="a14">д</i><i class="a16">на</i><i class="a7">я</i></div>
<div class="hl" style="left:61px;top:731px;width:1833px"></div>
<div class="cb" style="left:71px;top:705px"></div>
<div class="cell" style="left:109px;top:696px;width:64px;height:35px;line-height:35px"><i class="a14">127857</i></div>
<div class="cell" style="left:190px;top:696px;width:341px;height:35px;line-height:35px"><i class="a13">М</i><i class="a16">а</i><i class="a11">х</i><i class="a13">м</i><i class="a16">а</i><i class="a14">д</i><i class="a22">о</i><i class="a18">в</i><i class="a14"> </i><i class="a12">Р</i><i class="a22">и</i><i class="a18">в</i><i class="a22">о</i>ж<i class="a22">и</i><i class="a14">д</i><i class="a22">и</i><i class="a16">н</i><i class="a14"> </i>Н<i class="a16">а</i><i class="a11">б</i><i class="a22">о</i><i class="a16">т</i><i class="a22">о</i><i class="a18">в</i><i class="a22">и</i><i class="a16">ч</i><i class="a14"> </i><i class="a19">И</i>П</div>
<div class="cell" style="left:548px;top:696px;width:448px;height:35px;line-height:35px"><i class="a19">И</i><i class="a16">н</i><i class="a14">д</i><i class="a22">и</i><i class="a18">в</i><i class="a22">и</i><i class="a14">д</i><i class="a12">у</i><i class="a16">ал</i><i class="a6">ь</i><i class="a16">н</i><i class="a15">ы</i><i class="a14">й </i><i class="a15">п</i><i class="a14">р</i><i class="a18">е</i><i class="a14">д</i><i class="a15">п</i><i class="a14">р</i><i class="a22">и</i><i class="a16">н</i><i class="a22">и</i><i class="a13">м</i><i class="a16">ат</i><i class="a18">е</i><i class="a16">л</i><i class="a6">ь</i><i class="a14"> </i><i class="a13">М</i><i class="a16">а</i><i class="a11">х</i><i class="a13">м</i><i class="a16">а</i><i class="a14">д</i><i class="a22">о</i><i class="a18">в</i><i class="a14"> </i><i class="a12">Р</i><i class="a22">и</i><i class="a18">в</i><i class="a22">о</i>ж<i class="a22">и</i><i class="a14">д</i><i class="a22">и</i><i class="a16">н</i></div>
<div class="cell" style="left:1013px;top:696px;width:108px;height:35px;line-height:35px"><i class="a14">741101631908</i></div>
<div class="cell" style="left:1263px;top:696px;width:252px;height:35px;line-height:35px"><i class="a14">456600</i>,<i class="a14"> </i><i class="a12">Р</i><i class="a22">о</i><i class="a9">сс</i><i class="a22">и</i><i class="a7">я</i>,<i class="a14"> </i><i class="a9">Ч</i><i class="a18">е</i><i class="a16">л</i><i class="a7">я</i><i class="a11">б</i><i class="a22">и</i><i class="a16">н</i><i class="a9">с</i><i class="a18">к</i><i class="a16">а</i><i class="a7">я</i><i class="a14"> </i><i class="a22">о</i><i class="a11">б</i><i class="a16">л</i></div>
<div class="hl" style="left:61px;top:766px;width:1833px"></div>
<div class="cb" style="left:71px;top:740px"></div>
<div class="cell" style="left:109px;top:731px;width:64px;height:35px;line-height:35px"><i class="a14">127843</i></div>
<div class="cell" style="left:190px;top:731px;width:341px;height:35px;line-height:35px"><i class="a14">Ш</i><i class="a16">а</i><i class="a13">м</i><i class="a18">к</i><i class="a22">о</i><i class="a18">в</i><i class="a14"> </i><i class="a9">А</i><i class="a16">нат</i><i class="a22">о</i><i class="a16">л</i><i class="a22">и</i><i class="a14">й </i><i class="a9">А</i><i class="a16">л</i><i class="a18">ек</i><i class="a9">с</i><i class="a16">ан</i><i class="a14">др</i><i class="a22">о</i><i class="a18">в</i><i class="a22">и</i><i class="a16">ч</i><i class="a14"> </i><i class="a19">И</i>П</div>
<div class="cell" style="left:548px;top:731px;width:448px;height:35px;line-height:35px"><i class="a19">И</i><i class="a16">н</i><i class="a14">д</i><i class="a22">и</i><i class="a18">в</i><i class="a22">и</i><i class="a14">д</i><i class="a12">у</i><i class="a16">ал</i><i class="a6">ь</i><i class="a16">н</i><i class="a15">ы</i><i class="a14">й </i><i class="a15">п</i><i class="a14">р</i><i class="a18">е</i><i class="a14">д</i><i class="a15">п</i><i class="a14">р</i><i class="a22">и</i><i class="a16">н</i><i class="a22">и</i><i class="a13">м</i><i class="a16">ат</i><i class="a18">е</i><i class="a16">л</i><i class="a6">ь</i><i class="a14"> Ш</i><i class="a16">а</i><i class="a13">м</i><i class="a18">к</i><i class="a22">о</i><i class="a18">в</i><i class="a14"> </i><i class="a9">А</i><i class="a16">нат</i><i class="a22">о</i><i class="a16">л</i><i class="a22">и</i><i class="a14">й </i><i class="a9">А</i><i class="a16">л</i><i class="a18">ек</i><i class="a9">с</i><i class="a16">ан</i><i class="a14">др</i><i class="a22">о</i><i class="a18">в</i><i class="a22">и</i><i class="a16">ч</i></div>
<div class="cell" style="left:1013px;top:731px;width:108px;height:35px;line-height:35px"><i class="a14">780722802902</i></div>
<div class="cell" style="left:1263px;top:731px;width:252px;height:35px;line-height:35px"><i class="a15">null</i>,<i class="a14"> </i><i class="a12">Р</i><i class="a22">о</i><i class="a9">сс</i><i class="a22">и</i><i class="a7">я</i>,<i class="a14"> </i><i class="a12">Г</i><i class="a22">о</i><i class="a14">р</i><i class="a22">о</i><i class="a14">д </i><i class="a1">С</i><i class="a16">ан</i><i class="a18">к</i><i class="a16">т</i><i class="a12">-</i>П<i class="a18">е</i><i class="a16">т</i><i class="a18">е</i><i class="a14">р</i><i class="a11">б</i><i class="a12">у</i><i class="a14">р</i><i class="a9">г</i></div>
<div class="hl" style="left:61px;top:801px;width:1833px"></div>
<div class="cb" style="left:71px;top:775px"></div>
<div class="cell" style="left:109px;top:766px;width:64px;height:35px;line-height:35px"><i class="a14">127838</i></div>
<div class="cell" style="left:190px;top:766px;width:341px;height:35px;line-height:35px">П<i class="a18">е</i><i class="a16">т</i><i class="a14">р</i><i class="a12">у</i><i class="a14">ш</i><i class="a22">и</i><i class="a14">ш</i><i class="a22">и</i><i class="a16">н</i><i class="a14"> </i><i class="a9">А</i><i class="a16">л</i><i class="a18">ек</i><i class="a9">с</i><i class="a18">е</i><i class="a14">й </i>Н<i class="a22">и</i><i class="a18">к</i><i class="a22">о</i><i class="a16">ла</i><i class="a18">ев</i><i class="a22">и</i><i class="a16">ч</i><i class="a14"> </i><i class="a19">И</i>П</div>
<div class="cell" style="left:548px;top:766px;width:448px;height:35px;line-height:35px"><i class="a19">И</i><i class="a16">н</i><i class="a14">д</i><i class="a22">и</i><i class="a18">в</i><i class="a22">и</i><i class="a14">д</i><i class="a12">у</i><i class="a16">ал</i><i class="a6">ь</i><i class="a16">н</i><i class="a15">ы</i><i class="a14">й </i><i class="a15">п</i><i class="a14">р</i><i class="a18">е</i><i class="a14">д</i><i class="a15">п</i><i class="a14">р</i><i class="a22">и</i><i class="a16">н</i><i class="a22">и</i><i class="a13">м</i><i class="a16">ат</i><i class="a18">е</i><i class="a16">л</i><i class="a6">ь</i><i class="a14"> </i>П<i class="a18">е</i><i class="a16">т</i><i class="a14">р</i><i class="a12">у</i><i class="a14">ш</i><i class="a22">и</i><i class="a14">ш</i><i class="a22">и</i><i class="a16">н</i><i class="a14"> </i><i class="a9">А</i><i class="a16">л</i><i class="a18">ек</i><i class="a9">с</i><i class="a18">е</i><i class="a14">й</i></div>
<div class="cell" style="left:1013px;top:766px;width:108px;height:35px;line-height:35px"><i class="a14">713002689901</i></div>
<div class="cell" style="left:1263px;top:766px;width:252px;height:35px;line-height:35px"><i class="a15">null</i>,<i class="a14"> </i><i class="a12">Р</i><i class="a22">о</i><i class="a9">сс</i><i class="a22">и</i><i class="a7">я</i>,<i class="a14"> </i><i class="a0">Т</i><i class="a12">у</i><i class="a16">л</i><i class="a6">ь</i><i class="a9">с</i><i class="a18">к</i><i class="a16">а</i><i class="a7">я</i><i class="a14"> </i><i class="a22">о</i><i class="a11">б</i><i class="a16">ла</i><i class="a9">с</i><i class="a16">т</i><i class="a6">ь</i>,<i class="a14"> </i>Л</div>
<div class="hl" style="left:61px;top:836px;width:1833px"></div>
<div class="cb" style="left:71px;top:810px"></div>
<div class="cell" style="left:109px;top:801px;width:64px;height:35px;line-height:35px"><i class="a14">127616</i></div>
<div class="cell" style="left:190px;top:801px;width:341px;height:35px;line-height:35px"><i class="a1">С</i>ПВ<i class="a3">Б</i><i class="a14"> </i><i class="a9">АО</i></div>
<div class="cell" style="left:548px;top:801px;width:448px;height:35px;line-height:35px"><i class="a9">АК</i><i class="a14">Ц</i><i class="a19">И</i><i class="a9">О</i>Н<i class="a1">Е</i><i class="a12">Р</i>Н<i class="a9">О</i><i class="a1">Е</i><i class="a14"> </i><i class="a9">О</i><i class="a3">Б</i><i class="a11">Щ</i><i class="a1">ЕС</i><i class="a0">Т</i>В<i class="a9">О</i><i class="a14"> </i><i class="a11">&quot;</i><i class="a1">С</i><i class="a9">А</i>Н<i class="a9">К</i><i class="a0">Т</i><i class="a12">-</i>П<i class="a1">Е</i><i class="a0">Т</i><i class="a1">Е</i><i class="a12">Р</i><i class="a3">Б</i><i class="a8">У</i><i class="a12">РГ</i><i class="a1">С</i><i class="a9">КА</i>Я<i class="a14"> </i>В<i class="a9">А</i>Л<i class="a8">Ю</i><i class="a0">Т</i>Н<i class="a9">А</i>Я<i class="a11">&quot;</i></div>
<div class="cell" style="left:1013px;top:801px;width:108px;height:35px;line-height:35px"><i class="a14">7825331045</i></div>
<div class="cell" style="left:1138px;top:801px;width:108px;height:35px;line-height:35px"><i class="a14">780101001</i></div>
<div class="cell" style="left:1263px;top:801px;width:252px;height:35px;line-height:35px"><i class="a14">199178</i>,<i class="a14"> </i><i class="a12">Р</i><i class="a22">о</i><i class="a9">сс</i><i class="a22">и</i><i class="a7">я</i>,<i class="a14"> </i><i class="a9">г</i><i class="a14"> </i><i class="a1">С</i><i class="a16">ан</i><i class="a18">к</i><i class="a16">т</i><i class="a12">-</i>П<i class="a18">е</i><i class="a16">т</i><i class="a18">е</i><i class="a14">р</i><i class="a11">б</i><i class="a12">у</i><i class="a14">р</i><i class="a9">г</i></div>
<div class="hl" style="left:61px;top:871px;width:1833px"></div>
<div class="cb" style="left:71px;top:845px"></div>
<div class="cell" style="left:109px;top:836px;width:64px;height:35px;line-height:35px"><i class="a14">127613</i></div>
<div class="cell" style="left:190px;top:836px;width:341px;height:35px;line-height:35px">Н<i class="a9">КО</i><i class="a14"> Ц</i><i class="a9">К</i><i class="a14"> </i><i class="a12">Р</i><i class="a16">Д</i><i class="a9">К</i><i class="a14"> </i><i class="a11">()</i><i class="a14"> </i>Н<i class="a9">КО</i><i class="a14"> Ц</i><i class="a9">К</i><i class="a14"> </i><i class="a12">Р</i><i class="a16">Д</i><i class="a9">К</i><i class="a14"> </i><i class="a9">АО</i></div>
<div class="cell" style="left:548px;top:836px;width:448px;height:35px;line-height:35px"><i class="a9">АК</i><i class="a14">Ц</i><i class="a19">И</i><i class="a9">О</i>Н<i class="a1">Е</i><i class="a12">Р</i>Н<i class="a9">О</i><i class="a1">Е</i><i class="a14"> </i><i class="a9">О</i><i class="a3">Б</i><i class="a11">Щ</i><i class="a1">ЕС</i><i class="a0">Т</i>В<i class="a9">О</i><i class="a14"> </i>Н<i class="a1">Е</i><i class="a3">Б</i><i class="a9">А</i>Н<i class="a9">КО</i>В<i class="a1">С</i><i class="a9">КА</i>Я<i class="a14"> </i><i class="a9">К</i><i class="a12">Р</i><i class="a1">Е</i><i class="a16">Д</i><i class="a19">И</i><i class="a0">Т</i>Н<i class="a9">А</i>Я<i class="a14"> </i><i class="a9">О</i><i class="a12">РГ</i><i class="a9">А</i>Н<i class="a19">И</i>З<i class="a9">А</i><i class="a14">Ц</i><i class="a19">И</i>Я</div>
<div class="cell" style="left:1013px;top:836px;width:108px;height:35px;line-height:35px"><i class="a14">7725117665</i></div>
<div class="cell" style="left:1138px;top:836px;width:108px;height:35px;line-height:35px"><i class="a14">770401001</i></div>
<div class="cell" style="left:1263px;top:836px;width:252px;height:35px;line-height:35px"><i class="a14">119021</i>,<i class="a14"> </i><i class="a12">Р</i><i class="a22">о</i><i class="a9">сс</i><i class="a22">и</i><i class="a7">я</i>,<i class="a14"> </i><i class="a9">г</i><i class="a14"> </i><i class="a13">М</i><i class="a22">о</i><i class="a9">с</i><i class="a18">кв</i><i class="a16">а</i>,<i class="a14"> р</i><i class="a12">-</i><i class="a16">н</i><i class="a14"> </i><i class="a4">Х</i><i class="a16">а</i><i class="a13">м</i><i class="a22">о</i><i class="a18">в</i><i class="a16">н</i><i class="a22">и</i><i class="a18">к</i><i class="a22">и</i></div>
<div class="cell" style="left:1800px;top:836px;width:94px;height:35px;line-height:35px">Н<i class="a22">и</i><i class="a18">к</i><i class="a12">у</i><i class="a16">л</i><i class="a22">и</i><i class="a16">на</i><i class="a14"> </i><i class="a0">Т</i><i class="a16">ат</i><i class="a6">ь</i><i class="a7">я</i><i class="a16">на</i></div>
<div class="hl" style="left:61px;top:906px;width:1833px"></div>
<div class="cb" style="left:71px;top:880px"></div>
<div class="cell" style="left:109px;top:871px;width:64px;height:35px;line-height:35px"><i class="a14">127404</i></div>
<div class="cell" style="left:190px;top:871px;width:341px;height:35px;line-height:35px"><i class="a13">М</i><i class="a16">а</i><i class="a11">х</i><i class="a13">м</i><i class="a16">а</i><i class="a14">д</i><i class="a22">о</i><i class="a18">в</i><i class="a14"> </i><i class="a12">Р</i><i class="a22">и</i><i class="a18">в</i><i class="a22">о</i>ж<i class="a22">и</i><i class="a14">д</i><i class="a22">и</i><i class="a16">н</i><i class="a14"> </i>Н<i class="a16">а</i><i class="a11">б</i><i class="a22">о</i><i class="a16">т</i><i class="a22">о</i><i class="a18">в</i><i class="a22">и</i><i class="a16">ч</i><i class="a14"> </i><i class="a19">И</i>П</div>
<div class="cell" style="left:548px;top:871px;width:448px;height:35px;line-height:35px"><i class="a19">И</i><i class="a16">н</i><i class="a14">д</i><i class="a22">и</i><i class="a18">в</i><i class="a22">и</i><i class="a14">д</i><i class="a12">у</i><i class="a16">ал</i><i class="a6">ь</i><i class="a16">н</i><i class="a15">ы</i><i class="a14">й </i><i class="a15">п</i><i class="a14">р</i><i class="a18">е</i><i class="a14">д</i><i class="a15">п</i><i class="a14">р</i><i class="a22">и</i><i class="a16">н</i><i class="a22">и</i><i class="a13">м</i><i class="a16">ат</i><i class="a18">е</i><i class="a16">л</i><i class="a6">ь</i><i class="a14"> </i><i class="a13">М</i><i class="a16">а</i><i class="a11">х</i><i class="a13">м</i><i class="a16">а</i><i class="a14">д</i><i class="a22">о</i><i class="a18">в</i><i class="a14"> </i><i class="a12">Р</i><i class="a22">и</i><i class="a18">в</i><i class="a22">о</i>ж<i class="a22">и</i><i class="a14">д</i><i class="a22">и</i><i class="a16">н</i></div>
<div class="cell" style="left:1013px;top:871px;width:108px;height:35px;line-height:35px"><i class="a14">741101631908</i></div>
<div class="cell" style="left:1263px;top:871px;width:252px;height:35px;line-height:35px"><i class="a14">456600</i>,<i class="a14"> </i><i class="a12">Р</i><i class="a22">о</i><i class="a9">сс</i><i class="a22">и</i><i class="a7">я</i>,<i class="a14"> </i><i class="a9">Ч</i><i class="a18">е</i><i class="a16">л</i><i class="a7">я</i><i class="a11">б</i><i class="a22">и</i><i class="a16">н</i><i class="a9">с</i><i class="a18">к</i><i class="a16">а</i><i class="a7">я</i><i class="a14"> </i><i class="a22">о</i><i class="a11">б</i><i class="a16">л</i></div>
<div class="sbar"></div>
<div class="sthumb"></div>
<svg class="sarr" style="left:1899px;top:283px" width="11" height="8"><path d="M0.5 7 L5.5 1.5 L10.5 7Z" fill="#a9acb3"/></svg>
<svg class="sarr" style="left:1899px;top:880px" width="11" height="8"><path d="M0.5 1 L5.5 6.5 L10.5 1Z" fill="#a9acb3"/></svg></div>
<svg id="icons" width="1920" height="897" viewBox="0 0 1920 897">
<defs>
<filter id="sh" x="-30%" y="-30%" width="160%" height="160%"><feDropShadow dx="1" dy="1.2" stdDeviation="0.5" flood-color="#7a4300" flood-opacity="0.55"/></filter>
<filter id="ks" x="-50%" y="-50%" width="200%" height="200%"><feDropShadow dx="0" dy="1" stdDeviation="1.5" flood-color="#000" flood-opacity="0.4"/></filter>
<linearGradient id="tg" x1="0" x2="1" y1="0" y2="0"><stop offset="0" stop-color="#07893A"/><stop offset="1" stop-color="#2FAF5E"/></linearGradient>
<linearGradient id="xg" x1="0" x2="0" y1="0" y2="1"><stop offset="0" stop-color="#5AAB7C"/><stop offset="1" stop-color="#4D9A6E"/></linearGradient>
</defs>
<!-- LOGO -->
<g fill="none" stroke-width="3" stroke-linecap="butt">
  <path d="M27.6 17.6 A11.9 11.9 0 1 0 38.9 29.5" stroke="#FF7A0A"/>
  <path d="M38.9 29.5 A11.9 11.9 0 0 0 39 28" stroke="#FF7A0A"/>
</g>
<path fill="#0DB04B" fill-rule="evenodd" d="M26.3 30.4 V25.5 Q26.3 14.9 37 14.9 H42.6 V20.5 Q42.6 30.4 32 30.4 Z M29.2 27.5 Q29.6 18.4 39.6 17.9 Q39.2 27.2 29.2 27.5 Z"/>
<g fill="none" stroke="#0DB04B" stroke-width="3.1">
  <path d="M47 18.7 V34.2 Q47 38.9 51.7 38.9 H54.9"/>
  <path d="M61.5 33 H68.8 A6.3 6.3 0 1 0 68.9 35.6"/>
  <path d="M71.2 25.6 L84.4 40.3 M84.4 25.6 L71.2 40.3"/>
  <path d="M91 33 H98.2 A6.3 6.3 0 1 0 98.3 35.6"/>
  <path d="M102.9 40.5 V31 Q102.9 26.9 106.8 26.9 Q110.2 26.9 110.2 31 V40.5 M110.2 31 Q110.2 26.9 113.6 26.9 Q117.3 26.9 117.3 31 V40.5"/>
  <path d="M133.8 25.4 V40.5"/><circle cx="127.6" cy="33" r="6.2"/>
</g>
<rect x="136.3" y="36.9" width="3.6" height="3.6" fill="#FF7A0A"/>
<g fill="none" stroke="#FF7A0A" stroke-width="3.1">
  <path d="M142.8 40.5 V31 Q142.8 26.9 147 26.9 H149.3"/>
  <path d="M152.4 25.4 V34.5 Q152.4 38.9 156.8 38.9 Q161.4 38.9 161.4 34.5 V25.4"/>
</g>
<!-- HEADER ICONS -->
<g fill="none" stroke="#3E424C" stroke-width="2.1">
  <path d="M1360 28.6 L1372 17.2 L1384 28.6" stroke-width="2.6"/>
  <path d="M1363.1 26.8 V39 H1369.2 V31 H1374.8 V39 H1380.9 V26.8"/>
  <circle cx="1440" cy="28.7" r="11.6"/>
  <circle cx="1507" cy="28.7" r="11.6"/>
  <path d="M1878.8 25.7 L1885 31.9 L1891.2 25.7" stroke-width="2.5" stroke-linecap="round" stroke-linejoin="round"/>
</g>
<circle cx="1440" cy="23.6" r="1.3" fill="#3E424C"/>
<rect x="1438.9" y="26.4" width="2.3" height="7.3" fill="#3E424C"/>
<text x="1507" y="33.4" font-family="Liberation Sans" font-size="12.5" text-anchor="middle" fill="#3E424C" stroke="#3E424C" stroke-width="0.5">?</text>
<rect x="1579" y="13" width="32" height="32" rx="4.5" fill="#434852"/>
<g fill="none" stroke="#fff" stroke-width="2">
  <circle cx="1595" cy="27.9" r="4"/>
  <path d="M1589.8 45 V39.4 A5.2 5.2 0 0 1 1600.2 39.4 V45"/>
</g>
<!-- TAB X -->
<g stroke="#434751" stroke-width="2.5" stroke-linecap="round">
  <path d="M176.3 74.3 L186.6 84.6 M186.6 74.3 L176.3 84.6"/>
  <path d="M404.4 74.3 L414.7 84.6 M414.7 74.3 L404.4 84.6"/>
</g>
<!-- TOOLBAR ICONS -->
<g fill="none" stroke="#3E424C" stroke-width="2.2" stroke-linejoin="round">
  <path d="M107.2 110.7 H118.5 L124.9 117.1 V132.9 H107.2 Z"/>
  <path d="M191.6 115.8 H204.6 V132.2 H191.6 Z"/>
  <path d="M268.9 117.9 V112 H284.9 V117.9"/>
  <path d="M268.9 126.8 H265.5 V118.9 H288.3 V126.8 H284.9"/>
  <path d="M268.9 124 H284.9 V132.1 H268.9 Z"/>
</g>
<path d="M118 110 L125.6 117.6 H118 Z" fill="#3E424C"/>
<rect x="189" y="111.6" width="18" height="2.2" fill="#3E424C"/>
<rect x="195" y="110.6" width="6" height="1.5" fill="#3E424C"/>
<circle cx="285.2" cy="121.4" r="0.9" fill="#3E424C"/>
<!-- refresh -->
<path d="M1220.3 125 A10.9 10.9 0 1 1 1218.3 114.6" fill="none" stroke="#3E424C" stroke-width="2.4"/>
<path d="M1222.3 111 V119 H1214.2 Z" fill="#3E424C"/>
<!-- toggles -->
<rect x="1622.5" y="112.3" width="29.5" height="14.6" rx="7.3" fill="#C5C8CE"/>
<circle cx="1630.8" cy="119.6" r="8.9" fill="#fff" filter="url(#ks)"/>
<rect x="1790.8" y="112.3" width="30" height="14.6" rx="7.3" fill="url(#tg)"/>
<circle cx="1812.4" cy="119.6" r="8.9" fill="#fff" filter="url(#ks)"/>
<rect x="1715.3" y="107.5" width="25" height="24.6" rx="1.5" fill="url(#xg)"/>
<text x="1727.8" y="126.3" font-family="Liberation Sans" font-size="17" text-anchor="middle" fill="#fff" stroke="#fff" stroke-width="0.4">X</text>
<!-- gear -->
<g transform="translate(1873 128.9)" fill="#3E424C">
  <circle r="8.1"/><rect x="-2.15" y="-11.2" width="4.3" height="6" rx="2.1" transform="rotate(0)"/><rect x="-2.15" y="-11.2" width="4.3" height="6" rx="2.1" transform="rotate(45)"/><rect x="-2.15" y="-11.2" width="4.3" height="6" rx="2.1" transform="rotate(90)"/><rect x="-2.15" y="-11.2" width="4.3" height="6" rx="2.1" transform="rotate(135)"/><rect x="-2.15" y="-11.2" width="4.3" height="6" rx="2.1" transform="rotate(180)"/><rect x="-2.15" y="-11.2" width="4.3" height="6" rx="2.1" transform="rotate(225)"/><rect x="-2.15" y="-11.2" width="4.3" height="6" rx="2.1" transform="rotate(270)"/><rect x="-2.15" y="-11.2" width="4.3" height="6" rx="2.1" transform="rotate(315)"/>
  <circle r="5.1" fill="#F8F8F9"/>
</g>
<!-- SIDEBAR ICONS -->
<g fill="#fff" filter="url(#sh)">
  <!-- pencil -->
  <g transform="translate(17.1 144.8) rotate(-45)"><path d="M0 0 L3.2 -3.2 H22.2 V3.2 H3.2 Z"/><path d="M23.3 -3.2 H26.9 A3.2 3.2 0 0 1 26.9 3.2 H23.3 Z"/></g>
  <!-- QR -->
  <path fill-rule="evenodd" d="M15.75 188.4 H22.85 V195.8 H15.75 Z M17.9 190.70000000000002 V193.6 H20.75 V190.70000000000002 Z"/><path fill-rule="evenodd" d="M33.5 188.4 H40.6 V195.8 H33.5 Z M35.65 190.70000000000002 V193.6 H38.5 V190.70000000000002 Z"/><path fill-rule="evenodd" d="M15.75 206.1 H22.85 V213.5 H15.75 Z M17.9 208.4 V211.29999999999998 H20.75 V208.4 Z"/><path fill-rule="evenodd" d="M33.5 206.1 H40.6 V213.5 H33.5 Z M35.65 208.4 V211.29999999999998 H38.5 V208.4 Z"/>
  <rect x="28.2" y="188.9" width="1.9" height="1.9"/>
  <rect x="25.75" y="191.2" width="2.5" height="4.2"/>
  <rect x="27.8" y="194.3" width="2.4" height="3.2"/>
  <rect x="15.75" y="198.8" width="2.6" height="4.1"/>
  <rect x="15.75" y="201" width="4.5" height="1.9"/>
  <rect x="21" y="198.8" width="6" height="1.8"/>
  <rect x="23.5" y="200.5" width="2" height="2.4"/>
  <rect x="25.5" y="203.2" width="2.7" height="2.1"/>
  <rect x="29.2" y="200.6" width="4" height="2.3"/>
  <rect x="33.2" y="198.8" width="2.2" height="1.8"/>
  <rect x="35.4" y="200.6" width="2.6" height="2.4"/>
  <rect x="38" y="198.8" width="2.5" height="1.8"/>
  <path d="M27.3 206 H30.2 V213.6 H25.75 V207.6 H27.3 Z"/>
  <!-- sync -->
  <g fill="none" stroke="#fff" stroke-width="2.6">
    <path d="M28.3 262.4 A7.6 7.6 0 0 1 35.9 273.6"/>
    <path d="M20.6 264.6 A7.6 7.6 0 0 0 28.3 277.2"/>
  </g>
  <path d="M23.3 260.2 L28.9 255.3 V265.1 Z"/>
  <path d="M33.3 277.6 L27.7 272.8 V282.5 Z"/>
  <!-- list download -->
  <circle cx="18" cy="324.9" r="1.3"/>
  <circle cx="18" cy="329.9" r="1.3"/>
  <rect x="22" y="323.9" width="17.2" height="2.1"/>
  <rect x="22" y="328.9" width="17.2" height="2.1"/>
  <path d="M17 333.6 H39.4 V340.7 H34.6 V338.3 H36.9 V336.4 H19.5 V338.3 H21.8 V340.7 H17 Z"/>
  <path d="M24.4 338.3 H31.8 V343.4 H34.2 L28.1 349.2 L22.2 343.4 H24.4 Z"/>
  <!-- folder -->
  <path d="M15.5 395.3 Q15.5 393.8 17 393.8 H24.6 L26.6 396.4 H36.4 Q37.9 396.4 37.9 397.9 V399.4 H19.8 Q18.3 399.4 18.2 400.9 V413.9 H17 Q15.5 413.9 15.5 412.4 Z"/>
  <path d="M20.2 401.4 H42.2 L38.1 412.6 Q37.6 413.9 36.2 413.9 H17.6 Z"/>
  <!-- mail -->
  <rect x="15.7" y="461.2" width="24.9" height="19.7" rx="2.2"/>
  <!-- search -->
  <circle cx="25.1" cy="535.1" r="6.8" fill="none" stroke="#fff" stroke-width="3"/>
  <path d="M30.2 540.3 L38.6 548.6" stroke="#fff" stroke-width="3"/>
  <!-- calendar -->
  <path fill-rule="evenodd" d="M18.5 596.3 H37.9 Q39.4 596.3 39.4 597.8 V616.9 Q39.4 618.4 37.9 618.4 H18.5 Q17 618.4 17 616.9 V597.8 Q17 596.3 18.5 596.3 Z M19.5 602.3 V616.1 H36.9 V602.3 Z"/>
  <rect x="20.6" y="593.3" width="2.5" height="4"/>
  <rect x="33.1" y="593.3" width="2.5" height="4"/>
  <circle cx="22.9" cy="605.8" r="1.25"/>
  <circle cx="28" cy="605.8" r="1.25"/>
  <circle cx="33.1" cy="605.8" r="1.25"/>
  <!-- table clock -->
  <path fill-rule="evenodd" d="M17.3 660.8 H36.6 Q38.1 660.8 38.1 662.3 V670.4 A8 8 0 0 0 26 682.1 H17.3 Q15.8 682.1 15.8 680.6 V662.3 Q15.8 660.8 17.3 660.8 Z M18.3 664.2 V667.9 H25.6 V664.2 Z M28.1 664.2 V667.9 H35.6 V664.2 Z M18.3 670.9 V674.2 H24.5 V670.9 Z M18.3 677 V680.4 H23.3 V677 Z"/>
  <circle cx="33.1" cy="677.1" r="6.6" fill="none" stroke="#fff" stroke-width="2.1"/>
  <path d="M31.9 673.4 V678.1 L35.3 679.8" fill="none" stroke="#fff" stroke-width="1.4"/>
  <!-- list check -->
  <rect x="15.5" y="733.6" width="15.1" height="2.2"/>
  <rect x="15.5" y="738.6" width="15.1" height="2.2"/>
  <rect x="15.5" y="743.8" width="10.1" height="2.2"/>
  <path d="M28.8 745 L33.3 749.5 L41 741.7" fill="none" stroke="#fff" stroke-width="2.6"/>
</g>
<path d="M18.2 464.6 L28 470.1 L37.8 464.9" fill="none" stroke="#D98A1E" stroke-width="1.4"/>
<circle cx="40" cy="483.5" r="14.1" fill="#fff" stroke="#127A23" stroke-width="1.5"/>
<text x="40" y="488.8" font-family="Liberation Sans" font-weight="bold" font-size="13.5" text-anchor="middle" fill="#0B6A1C">9</text>
</svg>

<div class="abs" style="left:1624px;top:32px;font-size:14px;color:#3d4250;line-height:16px">ООО "Альфа"</div>
</body></html>
